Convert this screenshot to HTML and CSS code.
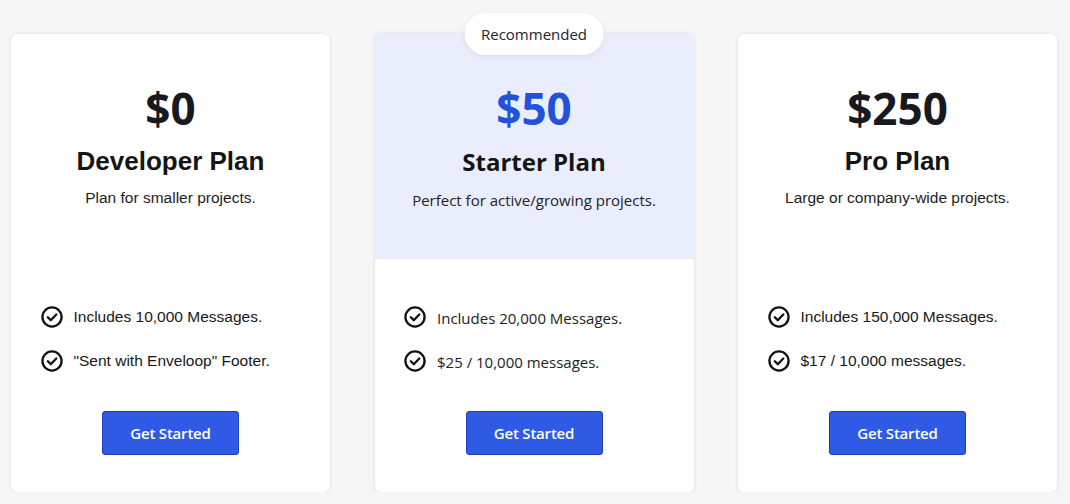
FILE: index.html
```html
<!DOCTYPE html>
<html lang="en">
<head>
<meta charset="utf-8">
<title>Pricing</title>
<link rel="stylesheet" href="styles.css">
</head>
<body>
<main class="plans">
  <section class="card">
    <div class="card-head">
      <div class="price">$0</div>
      <h2 class="plan-name">Developer Plan</h2>
      <p class="plan-desc">Plan for smaller projects.</p>
    </div>
    <ul class="features">
      <li><svg class="check" viewBox="0 0 20 20"><circle cx="10" cy="10" r="8.7"/><path d="M6.2 10.2l2.7 2.7 5-5.2"/></svg><span>Includes 10,000 Messages.</span></li>
      <li><svg class="check" viewBox="0 0 20 20"><circle cx="10" cy="10" r="8.7"/><path d="M6.2 10.2l2.7 2.7 5-5.2"/></svg><span>"Sent with Enveloop" Footer.</span></li>
    </ul>
    <div class="actions"><button class="btn">Get Started</button></div>
  </section>

  <section class="card card-featured">
    <div class="badge">Recommended</div>
    <div class="card-head">
      <div class="price">$50</div>
      <h2 class="plan-name">Starter Plan</h2>
      <p class="plan-desc">Perfect for active/growing projects.</p>
    </div>
    <ul class="features">
      <li><svg class="check" viewBox="0 0 20 20"><circle cx="10" cy="10" r="8.7"/><path d="M6.2 10.2l2.7 2.7 5-5.2"/></svg><span>Includes 20,000 Messages.</span></li>
      <li><svg class="check" viewBox="0 0 20 20"><circle cx="10" cy="10" r="8.7"/><path d="M6.2 10.2l2.7 2.7 5-5.2"/></svg><span>$25 / 10,000 messages.</span></li>
    </ul>
    <div class="actions"><button class="btn">Get Started</button></div>
  </section>

  <section class="card">
    <div class="card-head">
      <div class="price">$250</div>
      <h2 class="plan-name">Pro Plan</h2>
      <p class="plan-desc">Large or company-wide projects.</p>
    </div>
    <ul class="features">
      <li><svg class="check" viewBox="0 0 20 20"><circle cx="10" cy="10" r="8.7"/><path d="M6.2 10.2l2.7 2.7 5-5.2"/></svg><span>Includes 150,000 Messages.</span></li>
      <li><svg class="check" viewBox="0 0 20 20"><circle cx="10" cy="10" r="8.7"/><path d="M6.2 10.2l2.7 2.7 5-5.2"/></svg><span>$17 / 10,000 messages.</span></li>
    </ul>
    <div class="actions"><button class="btn">Get Started</button></div>
  </section>
</main>
</body>
</html>
```

FILE: styles.css
```css
* { box-sizing: border-box; }

html, body {
  margin: 0;
  padding: 0;
  background: #f6f6f6;
}

body {
  font-family: "Liberation Sans", Arial, sans-serif;
  color: #1b1b1b;
}

.plans {
  display: flex;
  align-items: flex-start;
  gap: 44.5px;
  padding: 34px 12px 0 11px;
}

.card {
  position: relative;
  width: 319px;
  height: 458px;
  background: #ffffff;
  border-radius: 6px;
  box-shadow: 0 0 3px rgba(0, 0, 0, 0.08), 0 1px 5px rgba(0, 0, 0, 0.05);
  display: flex;
  flex-direction: column;
}

.card-head {
  height: 225px;
  padding-top: 48px;
  text-align: center;
  border-radius: 6px 6px 0 0;
}

.price {
  font-family: "Open Sans", "Noto Sans", sans-serif;
  font-weight: 700;
  font-size: 44px;
  line-height: 52px;
  color: #18181f;
}

.plan-name {
  margin: 11px 0 0;
  font-size: 26px;
  line-height: 32px;
  font-weight: 700;
  color: #151515;
}

.plan-desc {
  margin: 9px 0 0;
  font-size: 15.5px;
  line-height: 24px;
  color: #1d1d1d;
}

.features {
  list-style: none;
  margin: 0;
  padding: 36px 0 0 30px;
}

.features li {
  display: flex;
  align-items: center;
  gap: 12px;
  height: 44px;
  font-size: 15.5px;
  color: #181818;
}

.check {
  width: 22px;
  height: 22px;
  flex: none;
  margin-left: -0.5px;
  margin-right: -1px;
  fill: none;
  stroke: #111111;
  stroke-width: 2.1;
  stroke-linecap: round;
  stroke-linejoin: round;
}

.actions {
  display: flex;
  justify-content: center;
  margin-top: 28px;
}

.btn {
  width: 137px;
  height: 44px;
  background: #2e5ae6;
  border: 1px solid #1c3db4;
  border-radius: 3px;
  color: #ffffff;
  font-family: "Open Sans", "Noto Sans", sans-serif;
  font-weight: 600;
  font-size: 15px;
  letter-spacing: -0.2px;
  cursor: pointer;
}

/* Featured (middle) card */
.card-featured {
  margin-top: -1px;
  height: 459px;
}

.card-featured .card-head {
  height: 226px;
  padding-top: 49px;
  background: #eaeefc;
}

.card-featured .price {
  color: #2152d9;
}

.card-featured .plan-name,
.card-featured .plan-desc,
.card-featured .features li {
  font-family: "Open Sans", "Noto Sans", sans-serif;
}

.card-featured .plan-name {
  font-size: 24px;
  margin-top: 12px;
}

.card-featured .plan-desc {
  font-size: 15px;
  margin-top: 10px;
  color: #222;
}

.card-featured .features li {
  font-size: 15px;
  color: #222;
}

.card-featured .features li span {
  position: relative;
  top: 1px;
}

.badge {
  position: absolute;
  top: -20px;
  left: 50%;
  transform: translateX(-50%);
  width: 139px;
  height: 42px;
  border-radius: 21px;
  background: #ffffff;
  box-shadow: 0 2px 6px rgba(0, 0, 0, 0.07);
  display: flex;
  align-items: center;
  justify-content: center;
  font-family: "Open Sans", "Noto Sans", sans-serif;
  font-size: 15px;
  color: #23232b;
  z-index: 1;
}
```
